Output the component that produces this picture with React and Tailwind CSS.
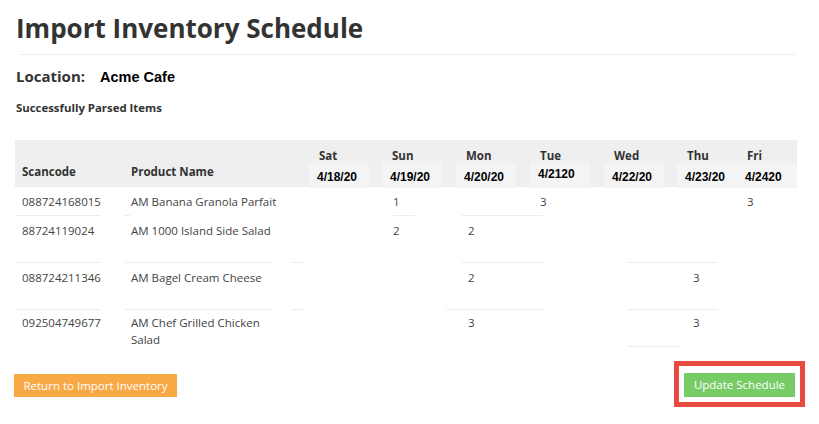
const cols = "grid grid-cols-[109px_185px_73px_74px_74px_74px_73px_60px_60px]";

const days = [
  { d: "Sat", date: "4/18/20" },
  { d: "Sun", date: "4/19/20" },
  { d: "Mon", date: "4/20/20" },
  { d: "Tue", date: "4/2120", up: true },
  { d: "Wed", date: "4/22/20" },
  { d: "Thu", date: "4/23/20" },
  { d: "Fri", date: "4/2420" },
];

function Sep({ segs }) {
  let cursor = 15;
  const items = [];
  segs.forEach(([s, e], i) => {
    items.push(<div key={"g" + i} style={{ width: s - cursor }} className="shrink-0" />);
    items.push(<div key={"s" + i} style={{ width: e - s }} className="h-px shrink-0 bg-[#ececec]" />);
    cursor = e;
  });
  return <div className="flex h-px">{items}</div>;
}

function Row({ h, pt, code, name, vals }) {
  return (
    <div className={cols} style={{ height: h }}>
      <div className="pl-[7px]" style={{ paddingTop: pt }}>{code}</div>
      <div className="pl-[7px]" style={{ paddingTop: pt }}>{name}</div>
      {Array.from({ length: 7 }).map((_, i) => (
        <div key={i} style={{ paddingTop: pt, paddingLeft: vals[i] ? vals[i][1] : 10 }}>
          {vals[i] ? vals[i][0] : ""}
        </div>
      ))}
    </div>
  );
}

export default function App() {
  return (
    <div className="w-[819px] h-[424px] bg-white text-[#333] font-['Open_Sans',sans-serif] overflow-hidden">
      <h1 className="ml-[16px] mt-[10px] text-[26px] leading-[37px] font-bold text-[#333]">
        Import Inventory Schedule
      </h1>
      <div className="ml-[20px] mt-[7px] w-[775px] h-px bg-[#ededed]" />
      <div className="ml-[16px] mt-[11px] flex items-baseline h-[20px]">
        <span className="text-[15px] leading-[20px] font-bold text-[#333] w-[84px]">Location:</span>
        <span className="font-['Liberation_Sans',Arial,sans-serif] font-bold text-[14.5px] text-black">Acme Cafe</span>
      </div>
      <div className="ml-[16px] mt-[14px] text-[11.4px] leading-[16px] font-bold text-[#333]">
        Successfully Parsed Items
      </div>

      <div className="ml-[15px] mt-[24px] w-[782px] text-[11.5px] leading-[17px] text-[#444]">
        <div className={cols + " h-[47px] bg-[#efeff0] font-bold text-[#333]"}>
          <div className="pl-[7px] pt-[23px]">Scancode</div>
          <div className="pl-[7px] pt-[23px]">Product Name</div>
          {days.map((d) => (
            <div key={d.d} className="flex flex-col">
              <div className="pl-[10px] pt-[7px] h-[23px] leading-[17px]">{d.d}</div>
              <div className="w-[60px] h-[25px] bg-[#f4f4f4] pl-[8px]">
                <span
                  className={
                    "font-['Liberation_Sans',Arial,sans-serif] font-bold text-[12px] text-black block " +
                    (d.up ? "pt-[3px]" : "pt-[6px]")
                  }
                >
                  {d.date}
                </span>
              </div>
            </div>
          ))}
        </div>

        <div className="h-px" />
        <Row h={27} pt={5} code="088724168015" name="AM Banana Granola Parfait"
          vals={[null, ["1", 11], null, ["3", 10], null, null, ["3", 10]]} />
        <Sep segs={[[15, 100], [125, 130], [393, 415], [462, 543]]} />
        <Row h={46} pt={6} code="88724119024" name="AM 1000 Island Side Salad"
          vals={[null, ["2", 11], ["2", 12], null, null, null, null]} />
        <Sep segs={[[15, 100], [125, 272], [292, 305], [462, 543], [627, 718]]} />
        <Row h={46} pt={6} code="088724211346" name="AM Bagel Cream Cheese"
          vals={[null, null, ["2", 12], null, null, ["3", 16], null]} />
        <Sep segs={[[15, 100], [125, 272], [292, 305], [446, 543], [627, 718]]} />
        <Row h={36} pt={4} code="092504749677" name={<>AM Chef Grilled Chicken<br />Salad</>}
          vals={[null, null, ["3", 12], null, null, ["3", 16], null]} />
        <Sep segs={[[627, 680]]} />
      </div>

      <div className="mt-[14px] flex items-start justify-between w-[805px]">
        <button className="ml-[14px] mt-[13px] w-[163px] h-[23px] bg-[#f9a846] text-white text-[11.5px] leading-[23px] text-center">
          Return to Import Inventory
        </button>
        <div className="border-[5px] border-[#e84a42] p-[5px]">
          <button className="w-[111px] h-[24px] bg-[#78cc66] text-white text-[11.5px] leading-[24px] text-center">
            Update Schedule
          </button>
        </div>
      </div>
    </div>
  );
}
